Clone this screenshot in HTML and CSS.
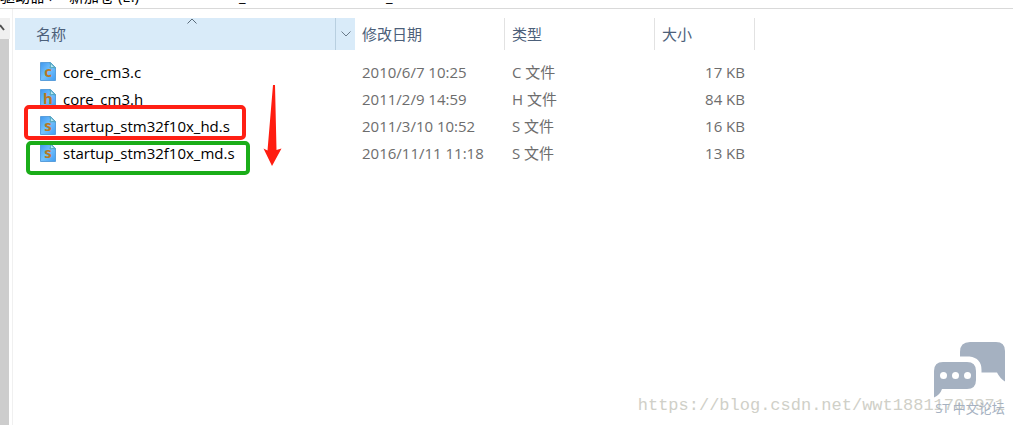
FILE: index.html
```
<!DOCTYPE html>
<html lang="zh-CN">
<head>
  <meta charset="UTF-8" />
  <meta name="viewport" content="width=device-width, initial-scale=1.0"/>
  <title>startup</title>
  <link rel="stylesheet" href="styles.css">
</head>
<body>
  <!-- Shared file icon -->
  <svg class="defs" aria-hidden="true">
    <defs>
      <linearGradient id="paper" x1="0" y1="0" x2="1" y2="1">
        <stop offset="0" stop-color="#3f97ee"/>
        <stop offset="0.5" stop-color="#74c2fd"/>
        <stop offset="1" stop-color="#3f9df2"/>
      </linearGradient>
      <symbol id="file" viewBox="0 0 16 19">
        <path d="M0.500 0.500h10l5 5v13h-15z" fill="url(#paper)" stroke="#5a9fdc"/>
        <path d="M10 0.500q1 3 0 5.500 3-1 5.500 0z" fill="#b5e8f2" stroke="#4ba0b8"/>
      </symbol>
    </defs>
  </svg>

  <header class="address-bar">
    <span class="crumb computer">驱动器 ›</span>
    <span class="crumb drive">新加卷 (E:)</span>
    <span class="crumb">_</span>
    <span class="crumb">_</span>
  </header>

  <div class="window">
    <aside class="scrollbar">
      <button class="scroll-up" aria-label="Scroll up">
        <svg width="6" height="9" viewBox="0 0 6 9"><path d="M0 1l4 5" fill="none" stroke="#505050" stroke-width="2"/></svg>
      </button>
      <div class="thumb"></div>
    </aside>

    <main class="files">
      <table>
        <thead>
          <tr>
            <th class="name">
              <div class="sorted">
                <span class="label">名称</span>
                <svg class="sort" width="10" height="6" viewBox="0 0 10 6"><path d="M0.5 5.5l4.5-4.5 4.5 4.5" fill="none" stroke="#5a6b7a"/></svg>
                <button class="filter" aria-label="筛选">
                  <svg width="10" height="6" viewBox="0 0 10 6"><path d="M0.5 0.5l4.5 4.5 4.5-4.5" fill="none" stroke="#6a7b8a"/></svg>
                </button>
              </div>
            </th>
            <th class="date">修改日期</th>
            <th class="type">类型</th>
            <th class="size">大小</th>
          </tr>
        </thead>
        <tbody>
          <tr>
            <td><div class="file"><svg class="icon"><use href="#file"/><text x="8" y="15">c</text></svg>core_cm3.c</div></td>
            <td>2010/6/7 10:25</td>
            <td>C 文件</td>
            <td>17 KB</td>
          </tr>
          <tr>
            <td><div class="file"><svg class="icon"><use href="#file"/><text x="8" y="15">h</text></svg>core_cm3.h</div></td>
            <td>2011/2/9 14:59</td>
            <td>H 文件</td>
            <td>84 KB</td>
          </tr>
          <tr>
            <td><div class="file"><svg class="icon"><use href="#file"/><text x="8" y="15">s</text></svg>startup_stm32f10x_hd.s</div><i class="mark red"></i></td>
            <td>2011/3/10 10:52</td>
            <td>S 文件</td>
            <td>16 KB</td>
          </tr>
          <tr>
            <td><div class="file"><svg class="icon"><use href="#file"/><text x="8" y="15">s</text></svg>startup_stm32f10x_md.s</div><i class="mark green"></i></td>
            <td>2016/11/11 11:18</td>
            <td>S 文件</td>
            <td>13 KB</td>
          </tr>
        </tbody>
      </table>
      <svg class="arrow" width="20" height="82" viewBox="0 0 20 82"><path d="M10 0h2l1.500 65 5-1.500L9 81 0.500 63.500l4 2z" fill="#ff1d10"/></svg>
    </main>
  </div>

  <div class="watermark">https://blog.csdn.net/wwt18811707971</div>
  <div class="forum">
    <svg width="72" height="56" viewBox="0 0 72 56">
      <path d="M36 0h26q9 0 9 9v30.500q-5-3-8-9H47.500V28q0-12-12-13.500H26V10q0-10 10-10z" fill="#a5b1c1"/>
      <path d="M9 20h24q9 0 9 9v9q0 9-9 9H8q-2 6-8 8.500V29q0-9 9-9z" fill="#a5b1c1"/>
      <circle cx="9.500" cy="33.500" r="3.500" fill="#fff"/>
      <circle cx="21.500" cy="33.500" r="3.500" fill="#fff"/>
      <circle cx="33.500" cy="33.500" r="3.500" fill="#fff"/>
    </svg>
    <span>ST 中文论坛</span>
  </div>
</body>
</html>
```
FILE: styles.css
```
* {
  box-sizing: border-box;
}

body {
  display: flex;
  flex-direction: column;
  height: 100vh;
  margin: 0;
  overflow: hidden;
  background: #fff;
  color: #6d6d6d;
  font-family: "Open Sans", "Noto Sans CJK SC", sans-serif;
  font-size: 15px;
}

button {
  display: flex;
  align-items: center;
  padding: 0;
  border: none;
  background: none;
}

.defs {
  position: absolute;
  width: 0;
  height: 0;
}

/* Address bar, scrolled mostly out of view */
.address-bar {
  display: flex;
  align-items: flex-end;
  flex: none;
  height: 9px;
  overflow: hidden;
  border-bottom: 1px solid #d9d9d9;
  color: #000;
  line-height: 24px;
}

.crumb {
  width: 147px;
  white-space: nowrap;
}

.crumb.computer {
  width: 69px;
}

.crumb.drive {
  width: 170px;
}

.window {
  display: flex;
  flex: 1;
}

.scrollbar {
  display: flex;
  flex-direction: column;
  width: 13px;
  padding-top: 9px;
  border-right: 1px solid #f0f0f0;
}

.scroll-up {
  width: 10px;
  height: 21px;
  background: #f0f0f0;
}

.thumb {
  flex: 1;
  width: 9px;
  background: #cdcdcd;
}

.files {
  position: relative;
  flex: 1;
  padding: 9px 0 0 2px;
}

table {
  width: 740px;
  border-collapse: separate;
  border-spacing: 0;
  table-layout: fixed;
}

th {
  height: 32px;
  padding: 0 7px 2px;
  border-right: 1px solid #e2e2e2;
  color: #4c607a;
  font-weight: normal;
  text-align: left;
}

th.name {
  width: 340px;
  padding: 0;
  border: none;
  background: #d9ebf9;
}

th.date {
  width: 150px;
}

th.type {
  width: 150px;
}

th.size {
  width: 100px;
}

.sorted {
  position: relative;
  display: flex;
  align-items: center;
  justify-content: space-between;
  height: 32px;
  padding-left: 21px;
}

.label {
  padding-bottom: 2px;
}

.sort {
  position: absolute;
  top: 0;
  left: 172px;
}

.filter {
  justify-content: center;
  width: 20px;
  height: 32px;
  border-left: 1px solid #b8cfe0;
}

td {
  position: relative;
  height: 27px;
  padding: 0 7px;
  line-height: 27px;
  white-space: nowrap;
}

td:first-child {
  padding-left: 25px;
  color: #000;
}

td:last-child {
  padding-right: 10px;
  text-align: right;
}

tbody::before {
  content: "";
  display: block;
  height: 9px;
}

.file {
  display: flex;
  align-items: center;
  gap: 7px;
  height: 27px;
}

.icon {
  width: 16px;
  height: 19px;
  margin-bottom: 2px;
  fill: #b87824;
  font-size: 15px;
  font-weight: bold;
  text-anchor: middle;
}

/* Hand-drawn highlights over the rows */
.mark {
  position: absolute;
  z-index: 1;
  border: 4px solid;
  border-radius: 5px;
}

.red {
  top: -8px;
  left: 9px;
  width: 222px;
  height: 35px;
  border-color: #ff2014;
}

.green {
  top: 1px;
  left: 11px;
  width: 224px;
  height: 34px;
  border-color: #1aad19;
}

.arrow {
  position: absolute;
  top: 76px;
  left: 250px;
}

.watermark {
  position: absolute;
  right: 8px;
  bottom: 7px;
  color: #d0d0c8;
  font-family: "Liberation Mono", monospace;
  font-size: 17px;
  line-height: 24px;
}

.forum {
  position: absolute;
  right: 7px;
  bottom: 6px;
  display: flex;
  flex-direction: column;
  align-items: center;
  color: #a5b1c1;
  font-size: 13px;
  line-height: 21px;
}
```
